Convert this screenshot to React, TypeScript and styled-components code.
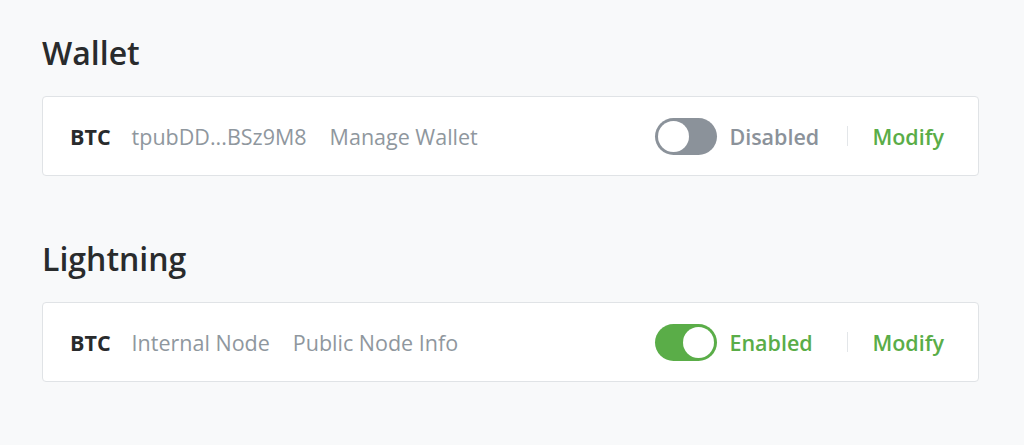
import React from "react";
import styled, { createGlobalStyle } from "styled-components";

const Global = createGlobalStyle`
  html, body { margin: 0; padding: 0; background: #f8f9fa; }
  body { font-family: "Open Sans", "Noto Sans", sans-serif; -webkit-font-smoothing: antialiased; }
`;

const Page = styled.div`
  padding: 30px 45px 0 42px;
  display: flex;
  flex-direction: column;
`;

const Section = styled.section`
  display: flex;
  flex-direction: column;
  margin-bottom: 60px;
`;

const Heading = styled.h2`
  margin: 0 0 20px;
  font-size: 32px;
  font-weight: 600;
  line-height: 46px;
  color: #292b2c;
`;

const Card = styled.div`
  box-sizing: border-box;
  height: 80px;
  background: #fff;
  border: 1px solid #e0e3e6;
  border-radius: 4px;
  display: flex;
  align-items: center;
  padding: 0 34px 0 27px;
`;

const Currency = styled.span`
  font-weight: 700;
  font-size: 21.5px;
  color: #292b2c;
  margin-right: 21px;
`;

const Meta = styled.span`
  font-size: 21.5px;
  color: #8f979e;
  margin-right: 23px;
`;

const Spacer = styled.div`
  flex: 1;
`;

const Toggle = styled.div<{ $on: boolean }>`
  box-sizing: border-box;
  width: 62px;
  height: 37px;
  border-radius: 19px;
  background: ${(p) => (p.$on ? "#5aad48" : "#8b929a")};
  padding: 3px;
  display: flex;
  justify-content: ${(p) => (p.$on ? "flex-end" : "flex-start")};
  margin-right: 12px;
`;

const Knob = styled.div`
  width: 31px;
  height: 31px;
  border-radius: 50%;
  background: #fff;
`;

const Status = styled.span<{ $on: boolean }>`
  font-size: 21.5px;
  font-weight: 600;
  color: ${(p) => (p.$on ? "#5aad48" : "#8b929a")};
  width: 106px;
`;

const Divider = styled.span`
  width: 1px;
  height: 20px;
  background: #e3e6e9;
  margin: 0 24px 0 12px;
`;

const Action = styled.a`
  font-size: 21.5px;
  font-weight: 600;
  color: #5aad48;
  text-decoration: none;
`;

type RowProps = { metas: string[]; on: boolean };

const Row = ({ metas, on }: RowProps) => (
  <Card>
    <Currency>BTC</Currency>
    {metas.map((m) => (
      <Meta key={m}>{m}</Meta>
    ))}
    <Spacer />
    <Toggle $on={on}>
      <Knob />
    </Toggle>
    <Status $on={on}>{on ? "Enabled" : "Disabled"}</Status>
    <Divider />
    <Action href="#">Modify</Action>
  </Card>
);

export default function App() {
  return (
    <>
      <Global />
      <Page>
        <Section>
          <Heading>Wallet</Heading>
          <Row metas={["tpubDD...BSz9M8", "Manage Wallet"]} on={false} />
        </Section>
        <Section>
          <Heading>Lightning</Heading>
          <Row metas={["Internal Node", "Public Node Info"]} on={true} />
        </Section>
      </Page>
    </>
  );
}
